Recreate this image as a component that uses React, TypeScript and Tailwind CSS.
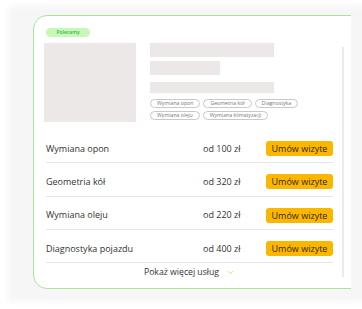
import { ChevronDown } from 'lucide-react';

const services = [
  { name: 'Wymiana opon', price: 'od 100 zł' },
  { name: 'Geometria kół', price: 'od 320 zł' },
  { name: 'Wymiana oleju', price: 'od 220 zł' },
  { name: 'Diagnostyka pojazdu', price: 'od 400 zł' },
];

const tagRows = [
  ['Wymiana opon', 'Geometria kół', 'Diagnostyka'],
  ['Wymiana oleju', 'Wymiana klimatyzacji'],
];

export default function App() {
  return (
    <div className="w-[362px] h-[309px] bg-white overflow-hidden font-['Open_Sans',sans-serif] text-[#333]">
      <div className="ml-[12px] mt-[10px] w-[360px] h-[288px] bg-[#f6f6f6] shadow-[0_0_6px_4px_#f6f6f6] pl-[21px] pt-[5px]">
        <div className="w-[318px] overflow-hidden">
          <div className="w-[340px] h-[274px] bg-white border border-[#a6e69b] rounded-l-[14px] flex items-start">
            {/* content */}
            <div className="w-[299px] pl-[10px] pt-[12px]">
              <div className="ml-[2px] w-[44px] h-[9px] rounded-full bg-[#c7f8b8] flex items-center justify-center text-[5px] font-semibold text-[#3fb545] leading-none">
                Polecamy
              </div>
              <div className="flex mt-[6px] gap-[14px]">
                <div className="w-[92px] h-[79px] bg-[#ece8e7]" />
                <div className="flex flex-col">
                  <div className="w-[124px] h-[14px] bg-[#ece8e7]" />
                  <div className="w-[70px] h-[14px] bg-[#ece8e7] mt-[4px]" />
                  <div className="w-[124px] h-[11px] bg-[#ece8e7] mt-[7px]" />
                  <div className="flex flex-col gap-[3px] mt-[6px]">
                    {tagRows.map((row, i) => (
                      <div key={i} className="flex gap-[3px]">
                        {row.map((t) => (
                          <span
                            key={t}
                            className="h-[9px] px-[6px] rounded-full border border-[#c8c8c8] text-[5.2px] text-[#777] flex items-center leading-none"
                          >
                            {t}
                          </span>
                        ))}
                      </div>
                    ))}
                  </div>
                </div>
              </div>
              <div className="ml-[2px] mt-[8px] w-[287px]">
                {services.map((s) => (
                  <div
                    key={s.name}
                    className="h-[33.3px] border-b border-[#e6e6e6] flex items-center pt-[5px] text-[9px]"
                  >
                    <span className="w-[157px]">{s.name}</span>
                    <span className="flex-1">{s.price}</span>
                    <button className="w-[67px] h-[15px] rounded-[3px] bg-[#fbb700] text-[#332600] text-[9px] leading-none">
                      Umów wizyte
                    </button>
                  </div>
                ))}
                <div className="flex items-center justify-center gap-[7px] h-[18px] text-[8.7px]">
                  <span>Pokaż więcej usług</span>
                  <ChevronDown className="w-[9px] h-[9px] text-[#f8c544]" strokeWidth={2} />
                </div>
              </div>
            </div>
            {/* track */}
            <div className="ml-[9px] mt-[31px] w-[1.5px] h-[230px] bg-[#ebebeb]" />
          </div>
        </div>
      </div>
    </div>
  );
}
